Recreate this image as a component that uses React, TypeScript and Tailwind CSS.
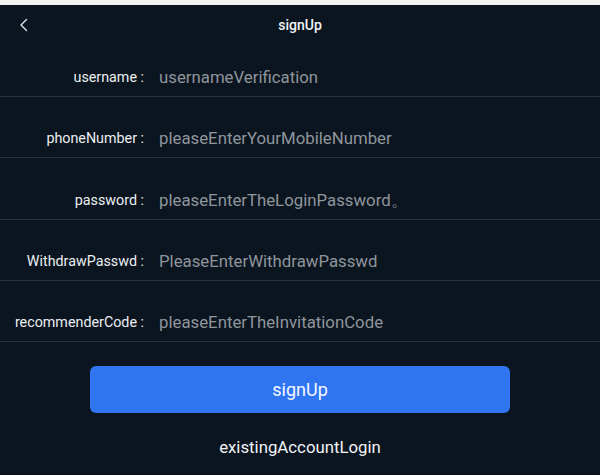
import React from 'react';

const FIELDS: Array<{ label: string; placeholder: string; height: string }> = [
  { label: 'username', placeholder: 'usernameVerification', height: 'h-[52px]' },
  { label: 'phoneNumber', placeholder: 'pleaseEnterYourMobileNumber', height: 'h-[61px]' },
  { label: 'password', placeholder: 'pleaseEnterTheLoginPassword。', height: 'h-[62px]' },
  { label: 'WithdrawPasswd', placeholder: 'PleaseEnterWithdrawPasswd', height: 'h-[61px]' },
  { label: 'recommenderCode', placeholder: 'pleaseEnterTheInvitationCode', height: 'h-[61px]' },
];

export default function App() {
  return (
    <div
      className="flex h-[475px] w-[600px] flex-col overflow-hidden bg-[#0a1520]"
      style={{ fontFamily: 'Roboto, "Noto Sans", sans-serif' }}
    >
      <div className="h-[5px] shrink-0 bg-[#f4f4f4]" />

      <header className="relative flex h-[40px] shrink-0 items-center justify-center">
        <button className="absolute left-[18px] top-[13px] text-[#e5e7eb]" aria-label="back">
          <svg width="12" height="14" viewBox="0 0 12 14" fill="none">
            <path d="M8.5 1.5 3 7l5.5 5.5" stroke="currentColor" strokeWidth="1.4" strokeLinecap="round" strokeLinejoin="round" />
          </svg>
        </button>
        <h1 className="text-[14px] font-medium text-[#f1f3f5]">signUp</h1>
      </header>

      <div className="flex flex-col">
        {FIELDS.map((field) => (
          <div
            key={field.label}
            className={`flex items-end border-b border-[#262f3b] pb-[7px] ${field.height}`}
          >
            <label className="flex h-[22px] w-[144px] shrink-0 items-center justify-end whitespace-pre text-[14.3px] text-[#eceef1]">
              {field.label} :
            </label>
            <input
              className="ml-[15px] h-[22px] flex-1 bg-transparent text-[16.8px] text-white outline-none placeholder:text-[#90959c]"
              placeholder={field.placeholder}
            />
          </div>
        ))}
      </div>

      <div className="flex flex-col items-center px-[90px] pt-[24px]">
        <button className="h-[47px] w-full rounded-[6px] bg-[#2f75f1] text-[18px] text-[#f5f8ff]">
          signUp
        </button>
        <button className="mt-[22px] text-[16.8px] text-[#f1f3f5]">existingAccountLogin</button>
      </div>
    </div>
  );
}
